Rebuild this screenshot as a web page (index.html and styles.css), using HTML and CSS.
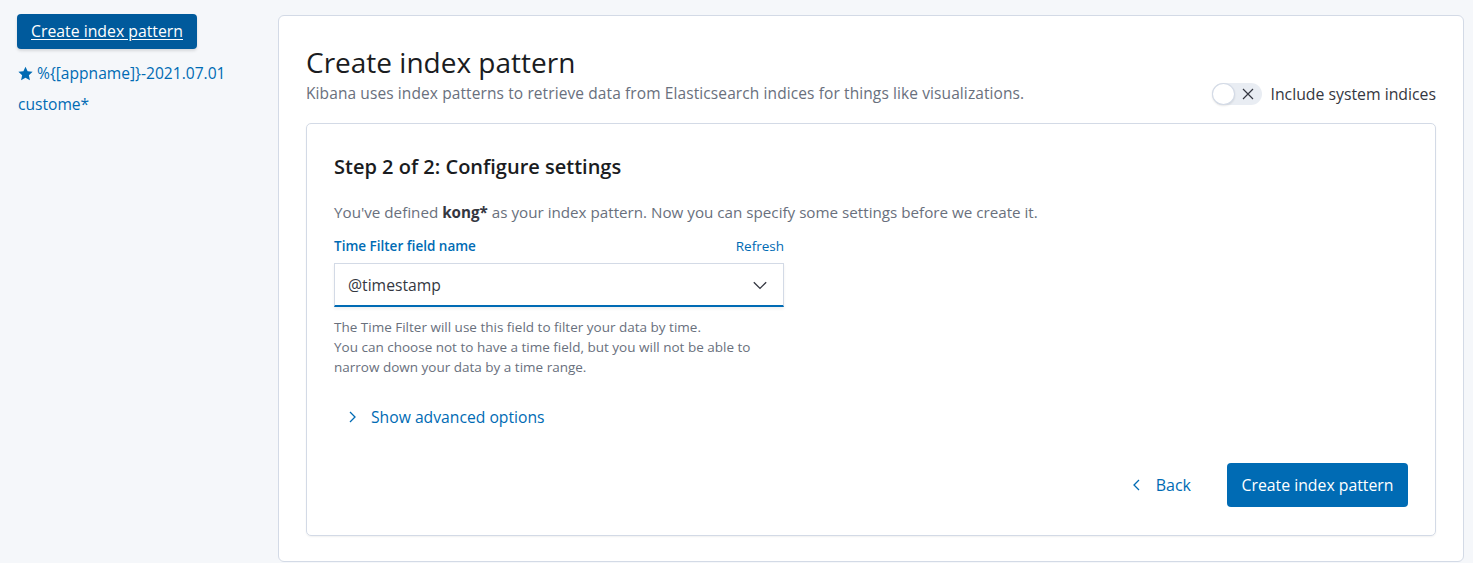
FILE: index.html
```html
<!DOCTYPE html>
<html>
<head>
<meta charset="utf-8">
<link rel="stylesheet" href="styles.css">
</head>
<body>
<div class="page">
  <aside class="side">
    <a class="side-btn" href="#">Create index pattern</a>
    <ul class="side-list">
      <li><svg class="star" viewBox="0 0 16 16" width="15" height="15"><path fill="#006bb4" d="M8 0.8l2.25 4.9 5.35.55-4 3.6 1.15 5.3L8 12.4l-4.75 2.75 1.15-5.3-4-3.6 5.35-.55z"/></svg>%{[appname]}-2021.07.01</li>
      <li>custome*</li>
    </ul>
  </aside>
  <main class="panel">
    <div class="head">
      <div class="head-text">
        <h1 class="title">Create index pattern</h1>
        <p class="subtitle">Kibana uses index patterns to retrieve data from Elasticsearch indices for things like visualizations.</p>
      </div>
      <label class="toggle">
        <span class="switch"><span class="knob"></span><svg class="x" viewBox="0 0 16 16" width="16" height="16"><path d="M3 3l10 10M13 3L3 13" stroke="#343741" stroke-width="1.2" fill="none"/></svg></span>
        <span>Include system indices</span>
      </label>
    </div>
    <section class="card">
      <h2 class="step">Step 2 of 2: Configure settings</h2>
      <p class="intro">You've defined <b>kong*</b> as your index pattern. Now you can specify some settings before we create it.</p>
      <div class="field">
        <div class="field-label"><span class="lbl">Time Filter field name</span><a class="refresh" href="#">Refresh</a></div>
        <div class="select"><span>@timestamp</span><svg viewBox="0 0 16 16" width="18" height="18"><path d="M2.5 5.5l5.5 5.5 5.5-5.5" stroke="#343741" stroke-width="1.2" fill="none"/></svg></div>
        <div class="help">The Time Filter will use this field to filter your data by time.<br>You can choose not to have a time field, but you will not be able to narrow down your data by a time range.</div>
      </div>
      <a class="advanced" href="#"><svg viewBox="0 0 16 16" width="16" height="16"><path d="M6 3l5 5-5 5" stroke="#006bb4" stroke-width="1.3" fill="none"/></svg>Show advanced options</a>
      <div class="actions">
        <a class="back" href="#"><svg viewBox="0 0 16 16" width="16" height="16"><path d="M10 3L5 8l5 5" stroke="#006bb4" stroke-width="1.3" fill="none"/></svg>Back</a>
        <button class="primary">Create index pattern</button>
      </div>
    </section>
  </main>
</div>
</body>
</html>
```

FILE: styles.css
```css
* { box-sizing: border-box; }
html, body { margin: 0; padding: 0; }
body {
  background: #f5f7fa;
  font-family: "Open Sans", "Liberation Sans", sans-serif;
  color: #343741;
  height: 563px;
  overflow: hidden;
}
.page {
  display: flex;
  align-items: flex-start;
  padding: 14px 9px 0 17px;
}
.side {
  width: 261px;
  flex: none;
}
.side-btn {
  display: inline-block;
  width: 180px;
  height: 35px;
  line-height: 35px;
  text-align: center;
  background: #005a9c;
  color: #fff;
  font-size: 15.8px;
  font-weight: 500;
  text-decoration: underline;
  text-underline-offset: 2px;
  border-radius: 4px;
  box-shadow: 0 2px 3px rgba(0,0,0,0.12);
}
.side-list {
  list-style: none;
  margin: 12px 0 0 1px;
  padding: 0;
  color: #006bb4;
  font-size: 15.6px;
}
.side-list li {
  display: flex;
  align-items: center;
  height: 24px;
  margin-bottom: 7px;
}
.star { margin-right: 4px; }
.panel {
  flex: 1;
  margin-top: 1px;
  background: #fff;
  border: 1px solid #d3dae6;
  border-radius: 6px;
  padding: 28px 27px 25px 27px;
}
.head {
  display: flex;
  justify-content: space-between;
  align-items: flex-end;
}
.title {
  margin: 0;
  font-size: 28px;
  font-weight: 500;
  color: #1a1c21;
  line-height: 36px;
}
.subtitle {
  margin: 3px 0 0;
  font-size: 15.5px;
  letter-spacing: 0.1px;
  color: #69707d;
  line-height: 20px;
}
.toggle {
  display: flex;
  align-items: center;
  font-size: 15.8px;
  color: #343741;
  margin-bottom: -2px;
}
.switch {
  position: relative;
  width: 50px;
  height: 22px;
  border-radius: 12px;
  background: #e9edf3;
  margin-right: 9px;
  display: inline-block;
}
.knob {
  position: absolute;
  left: 0;
  top: 0;
  width: 23px;
  height: 22px;
  border-radius: 50%;
  background: #fff;
  border: 1px solid #d3dae6;
  box-shadow: 0 1px 2px rgba(0,0,0,0.1);
}
.x { position: absolute; left: 28px; top: 3px; }
.card {
  margin-top: 20px;
  border: 1px solid #d3dae6;
  border-radius: 5px;
  padding: 28px 27px 28px 27px;
  box-shadow: 0 1px 2px rgba(0,0,0,0.06);
}
.step {
  margin: 0;
  font-size: 20px;
  font-weight: 600;
  color: #1a1c21;
  line-height: 30px;
}
.intro {
  margin: 18px 0 0;
  font-size: 15.2px;
  color: #69707d;
  line-height: 24px;
}
.intro b { color: #343741; font-weight: 700; }
.field { width: 450px; margin-top: 12px; }
.field-label {
  display: flex;
  justify-content: space-between;
  font-size: 13.5px;
  line-height: 20px;
  margin-bottom: 7px;
}
.lbl { color: #006bb4; font-weight: 600; }
.refresh { color: #006bb4; text-decoration: none; }
.select {
  height: 44px;
  border: 1px solid #d3dae6;
  border-bottom: 2px solid #006bb4;
  background: #fff;
  display: flex;
  align-items: center;
  justify-content: space-between;
  padding: 0 14px 0 13px;
  font-size: 15.7px;
  color: #343741;
  box-shadow: 0 2px 3px rgba(0,0,0,0.06);
}
.help {
  margin-top: 10px;
  font-size: 13.5px;
  line-height: 20px;
  color: #69707d;
}
.advanced {
  display: flex;
  align-items: center;
  margin: 28px 0 0 10px;
  color: #006bb4;
  text-decoration: none;
  font-size: 15.7px;
  line-height: 24px;
}
.advanced svg { margin-right: 11px; }
.actions {
  display: flex;
  justify-content: flex-end;
  align-items: center;
  margin-top: 34px;
}
.back {
  display: flex;
  align-items: center;
  color: #006bb4;
  text-decoration: none;
  font-size: 16px;
  margin-right: 36px;
}
.back svg { margin-right: 11px; }
.primary {
  width: 181px;
  height: 44px;
  background: #006bb4;
  border: none;
  border-radius: 4px;
  color: #fff;
  font-family: inherit;
  font-size: 15.8px;
  font-weight: 500;
}
```
